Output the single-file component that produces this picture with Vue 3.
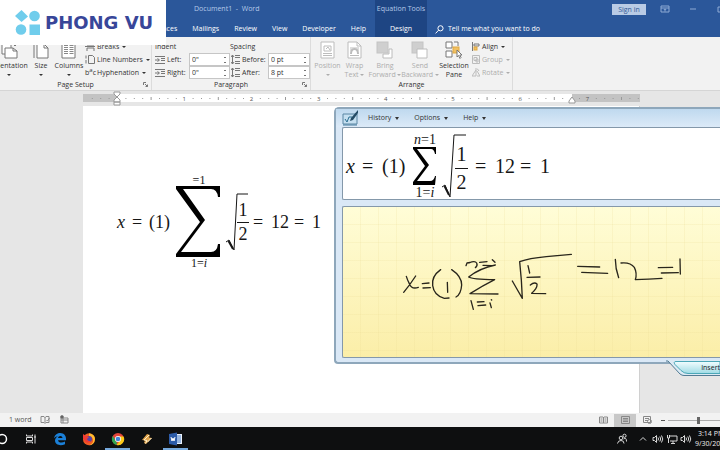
<script setup>
const tabs = ['References', 'Mailings', 'Review', 'View', 'Developer', 'Help']
const indents = [
  { id: 'left', label: 'Left:', value: '0"' },
  { id: 'right', label: 'Right:', value: '0"' },
]
const spacings = [
  { id: 'before', label: 'Before:', value: '0 pt' },
  { id: 'after', label: 'After:', value: '8 pt' },
]
const inches = [1, 2, 3, 4, 5, 6, 7]
const ticks = Array.from({ length: 66 }, (_, i) => i - 3).filter((i) => i % 8 !== 0)
const menus = ['History', 'Options', 'Help']
</script>

<template>
  <div class="app">
    <header class="titlebar">
      <nav class="tabs">
        <a v-for="tab in tabs" :key="tab" href="#">{{ tab }}</a>
      </nav>
      <div class="tools">
        <span>Equation Tools</span>
        <a href="#">Design</a>
      </div>
      <a class="tell" href="#">
        <svg width="9" height="9" viewBox="0 0 9 9"><circle cx="5.5" cy="3.3" r="2.6" /><path d="M3.6 5.2 .6 8.4" /></svg>
        Tell me what you want to do
      </a>
      <div class="window">
        <button class="signin">Sign in</button>
        <svg width="74" height="10" viewBox="0 0 74 10">
          <path d="M15 2h8v6h-8zM15 4h8M19 7.500V5M17.800 6 19 4.800 20.200 6M44 5h6M72 3h5v5h-5z" />
        </svg>
      </div>
      <span class="title">Document1&nbsp; -&nbsp; Word</span>
    </header>

    <div class="brand">
      <svg width="26" height="26" viewBox="0 0 26 26">
        <path d="M6.500 0 13 6.500 6.500 12 0 6z" /><circle cx="19.500" cy="6" r="5.300" />
        <circle cx="6" cy="19.500" r="5.300" /><rect x="14.500" y="14.500" width="10.500" height="10.500" />
      </svg>
      <span>PHONG VU</span>
    </div>

    <section class="ribbon">
      <div class="group setup">
        <div class="body">
          <button class="big orient">
            <svg width="20" height="18" viewBox="0 0 20 18"><path class="page" d="M3 1h6l3 3v9H3z" /><path class="page" d="M6 7h8l4 3v7H6z" /><path d="M14 7v3h4M12 1q4 0 4 4M14.500 3.500 16 5l1.500-1.500" /></svg>
            <span>Orientation</span><i class="caret"></i>
          </button>
          <button class="big size">
            <svg width="18" height="18" viewBox="0 0 18 18"><path class="page" d="M5 3h7l4 4v10H5z" /><path d="M12 3v4h4M2 2v15M1 3l1-2 1 2M5 1h10" /></svg>
            <span>Size</span><i class="caret"></i>
          </button>
          <button class="big cols">
            <svg width="16" height="18" viewBox="0 0 16 18"><path class="page" d="M1 1h13v16H1z" /><path class="lines" d="M3 4.500h4M3 6.500h4M3 8.500h4M3 10.500h4M8.500 4.500h4M8.500 6.500h4M8.500 8.500h4M8.500 10.500h4M3 12.500h4M8.500 12.500h4" /></svg>
            <span>Columns</span><i class="caret"></i>
          </button>
          <div class="rows">
            <button class="row"><svg width="10" height="9" viewBox="0 0 10 9"><path d="M2 0v3h7V0M2 9V6h7v3M0 4.500h10" /></svg>Breaks<i class="caret"></i></button>
            <button class="row"><svg width="10" height="9" viewBox="0 0 10 9"><path d="M3.500.5h4l2 2v6h-6zM1 .5v3M1 5v3.500" /></svg>Line Numbers<i class="caret"></i></button>
            <button class="row"><b class="bc">b<sup>a</sup>c</b>Hyphenation<i class="caret"></i></button>
          </div>
        </div>
        <footer>Page Setup<svg class="launch" width="5" height="5" viewBox="0 0 5 5"><path d="M.5 3V.5H3M2 2l2.500 2.500M4.500 2.500v2h-2" /></svg></footer>
      </div>

      <div class="group para">
        <div class="body">
          <div class="fields indent">
            <strong>Indent</strong>
            <div v-for="f in indents" :key="f.id" class="field">
              <svg width="10" height="8" viewBox="0 0 10 8"><path d="M0 .5h10M6 2.500h4M6 4.500h4M0 7.500h10M0 4h4M2.500 2.500 4.500 4 2.500 5.500" /></svg>
              <label :for="f.id">{{ f.label }}</label>
              <span class="spin"><input :id="f.id" :value="f.value" /><i></i></span>
            </div>
          </div>
          <div class="fields spacing">
            <strong>Spacing</strong>
            <div v-for="f in spacings" :key="f.id" class="field">
              <svg width="9" height="9" viewBox="0 0 9 9"><path d="M4 .5h5M4 2.500h5M4 6.500h5M4 8.500h5M1.500 0v9M0 2l1.500-2L3 2M0 7l1.500 2L3 7" /></svg>
              <label :for="f.id">{{ f.label }}</label>
              <span class="spin"><input :id="f.id" :value="f.value" /><i></i></span>
            </div>
          </div>
        </div>
        <footer>Paragraph<svg class="launch" width="5" height="5" viewBox="0 0 5 5"><path d="M.5 3V.5H3M2 2l2.500 2.500M4.500 2.500v2h-2" /></svg></footer>
      </div>

      <div class="group arrange">
        <div class="body">
          <button class="big off" disabled>
            <svg width="16" height="18" viewBox="0 0 16 18"><path class="page" d="M1 1h13v16H1z" /><path d="M4 5h7v5H4zM3 12.500h9M3 14.500h9M6 8l2-2 2 3" /></svg>
            <span>Position</span><i class="caret"></i>
          </button>
          <button class="big off" disabled>
            <svg width="16" height="18" viewBox="0 0 16 18"><path class="page" d="M1 1h9l4 4v12H1z" /><path d="M10 1v4h4M3 7h9M3 9h2M10 9h2M3 14.500h9" /><path class="bold" d="M4 13q0-5 3.500-5T11 13" /></svg>
            <span>Wrap<br />Text <i class="caret"></i></span>
          </button>
          <button class="big off wide" disabled>
            <svg width="18" height="18" viewBox="0 0 18 18"><rect class="fill" x="1" y="1" width="11" height="11" /><path class="page" d="M13 8h3v9H7v-4h6z" /></svg>
            <span>Bring<br />Forward <i class="caret"></i></span>
          </button>
          <button class="big off wide" disabled>
            <svg width="18" height="18" viewBox="0 0 18 18"><rect class="fill" x="1" y="1" width="11" height="11" /><path class="page" d="M6 8h10v9H6z" /></svg>
            <span>Send<br />Backward <i class="caret"></i></span>
          </button>
          <button class="big pane">
            <svg width="18" height="18" viewBox="0 0 18 18"><path class="page" d="M1 1h6v6H1zM1 10h6v6H1z" /><rect class="gold" x="8" y="6" width="6" height="6" /><path class="page" d="M9 1h4v4M12 9v7l1.500-1.500 1.500 3 1-1-1.200-2.500H17z" /></svg>
            <span>Selection<br />Pane</span>
          </button>
          <div class="rows">
            <button class="row"><svg width="8" height="9" viewBox="0 0 8 9"><path d="M.5 0v9M2 2h5v2H2z" /><rect class="gold" x="2" y="5" width="3" height="3" /></svg>Align<i class="caret"></i></button>
            <button class="row off" disabled><svg width="8" height="9" viewBox="0 0 8 9"><path d="M.5.5h7v8h-7zM2 2.500h3v3H2zM4 4h2v3H4z" /></svg>Group<i class="caret"></i></button>
            <button class="row off" disabled><svg width="8" height="9" viewBox="0 0 8 9"><path d="M0 8h4V2zM5 8h3L5 3M3 1q3-1 4 2" /></svg>Rotate<i class="caret"></i></button>
          </div>
        </div>
        <footer>Arrange</footer>
      </div>
    </section>

    <main class="workspace">
      <svg class="ruler" width="557" height="15" viewBox="0 0 557 15">
        <rect x="0" y="3" width="557" height="8" fill="#c3c3c3" />
        <rect x="34" y="3" width="455" height="8" fill="#fff" />
        <rect v-for="t in ticks" :key="t" class="tick" :x="34 + t * 8.4" :y="t % 4 ? 7 : 6" width="1" :height="t % 4 ? 1 : 3" />
        <text v-for="n in inches" :key="n" :x="34 + n * 67.2" y="10">{{ n }}</text>
        <path class="mark" d="M31 1h6v2l-3 3-3-3zM31 11V9l3-3 3 3v2zM31 11h6v3h-6zM486 10l3-4 3 4v2h-6z" />
      </svg>

      <article class="sheet">
        <div class="equation doc">
          <em>x</em><span>=</span><span>(1)</span>
          <span class="sum">
            <small>=1</small>
            <svg width="46" height="72" viewBox="0 0 46 72"><path d="M0 0h44v11h-2q-1-8-7-8H7l22 31L5 66h30q6 0 7-8h2v13H0v-3L24 36 0 3z" /></svg>
            <small>1=<em>i</em></small>
          </span>
          <span class="root">
            <svg width="22" height="58" viewBox="0 0 22 58"><path class="thin" d="M0 49l3-2 5 10L11 1h11" /><path class="thick" d="M2.500 48 7 56" /></svg>
            <span class="frac"><b>1</b><b>2</b></span>
          </span>
          <span>=</span><span>12</span><span>=</span><span>1</span>
        </div>
      </article>

      <section class="panel">
        <nav class="menu">
          <svg width="17" height="16" viewBox="0 0 17 16"><path d="M1 4h14v10H1z" fill="#c5dff0" stroke="#5b86a3" /><path d="M3 9l2 3 2-5h3" fill="none" stroke="#2a6e91" /><path d="M16 0 9 8l-1 3 3-1 5-7z" fill="#254c66" /><path d="M1 15h14" stroke="#437b9c" /></svg>
          <button v-for="m in menus" :key="m">{{ m }}<i class="caret"></i></button>
        </nav>
        <div class="preview">
          <div class="equation math">
            <em>x</em><span>=</span><span>(1)</span>
            <span class="sum">
              <small><em>n</em>=1</small>
              <svg width="24" height="38" viewBox="0 0 24 38"><path d="M0 0h23v7h-1q-1-5-4-5H4l12 16L4 34h13q4 0 5-5h1l-1 9H0v-3l12-16L0 2z" /></svg>
              <small>1=<em>i</em></small>
            </span>
            <span class="root">
              <svg width="25" height="64" viewBox="0 0 25 64"><path class="thin" d="M0 53l3-2 5 12L12 1h12" /><path class="thick" d="M2.500 52 7 61" /></svg>
              <span class="frac"><b>1</b><b>2</b></span>
            </span>
            <span>=</span><span>12</span><span>=</span><span>1</span>
          </div>
        </div>
        <div class="ink">
          <svg width="378" height="150" viewBox="36 36 1134 450">
            <path d="M226 244q3 10 9 22 7 18 27 11M254 243q-16 25-36 49M274 266l20-2M276 279l22-1M329 224q-28 20-24 48 4 30 35 38l14-1M349 262l1 30M362 224q30 20 30 46-2 28-17 36" />
            <path d="M405 212l3-8 9-2M414 204q18-8 23 0 4 7-4 14M446 202l22-2M456 211l26 1M484 194l8 8M493 210q-48 10-80 36 10 7 78 8-34 17-74 42l84 1M420 317l7 26M439 321l20-1M441 332l23-2M481 314l1 1M477 324l4 14" />
            <path d="M544 258q16 28 30 52-2-55-8-110 28-10 80-15l75-7M591 212l5 22M588 247l39-1M598 270q12-10 20-3 2 12-16 28l42 1" />
            <path d="M740 214l66 2M752 232l78 3M853 193q0 28 10 55M870 204q28-3 40 13 9 18 3 37 40-1 80-4M982 218l43-1M991 234l51-1M1047 192l1 45" />
          </svg>
        </div>
        <div class="foot">
          <svg width="54" height="16" viewBox="0 0 54 16">
            <defs><linearGradient id="teal" x2="0" y2="1"><stop offset="0" stop-color="#f2fdff" /><stop offset="1" stop-color="#9fdbe4" /></linearGradient></defs>
            <path d="M0-2h54v16H18q-3 0-6-4L3 0z" fill="#dceaf4" />
            <path d="M0-1h2l12 13q2 1.500 4 1.500h36" fill="none" stroke="#527b93" />
            <path d="M54-.500H10q-3 0-1 3l6 6q3 3 7 3h32z" fill="url(#teal)" stroke="#4ba7b7" />
          </svg>
          <button>Insert</button>
        </div>
      </section>
    </main>

    <div class="status">
      <span class="words">1 word</span>
      <svg width="30" height="10" viewBox="0 0 30 10"><path d="M1 1.500h3l1 1 1-1h3v6H6l-1 1-1-1H1zM5 2v6M6.500 5l1 1 2-3M21 3h7v5h-7zM21 5h7M23 3v5" /><circle class="dot" cx="22" cy="2" r="1.500" /></svg>
      <div class="views">
        <button aria-label="Read mode"><svg width="9" height="8" viewBox="0 0 9 8"><path d="M.5 1h3.500l.5.500L5 1h3.500v6H.5zM4.500 1v6M1.500 3h2M1.500 5h2M5.500 3h2M5.500 5h2" /></svg></button>
        <button class="on" aria-label="Print layout"><svg width="9" height="8" viewBox="0 0 9 8"><path d="M.5.5h8v7h-8zM2 2.500h5M2 4h5M2 5.500h5" /></svg></button>
        <button aria-label="Web layout"><svg width="9" height="8" viewBox="0 0 9 8"><path d="M.5.5h7v6h-7zM2 2.500h4M2 4.500h3" /><circle cx="6.500" cy="5.500" r="2" /></svg></button>
      </div>
      <span class="minus"></span>
      <input class="zoom" type="range" aria-label="Zoom" min="0" max="100" value="60" />
    </div>

    <footer class="taskbar">
      <div class="apps">
        <button aria-label="Search"><svg width="14" height="14" viewBox="0 0 14 14"><circle cx="7" cy="7" r="4.500" fill="none" stroke="#fff" stroke-width="1.500" /></svg></button>
        <button aria-label="Task view"><svg width="14" height="14" viewBox="0 0 14 14"><path d="M2.500 2.500v1.500h6V2.500M2.500 11.500V10h6v1.500M2.500 5.500h6v3h-6zM11 2.500v9M10 5h2" fill="none" stroke="#ddd" /></svg></button>
        <button aria-label="Edge"><svg width="14" height="14" viewBox="0 0 14 14"><path d="M1 6.300C2 2.500 4.300 1 7.300 1 11 1 13 4 13 6.500v1.700H5c.3 2.600 4 3 7 1.300v2.700C7 14.500 2 12.500 2 8.500c0-2 1.300-3.500 3-4.300C3.500 4.300 2 5 1 6.300zM5 6h4.500C9.300 3.200 5.500 3.200 5 6z" fill="#1b80d8" /></svg></button>
        <button aria-label="Firefox"><svg width="14" height="14" viewBox="0 0 14 14"><circle cx="7" cy="7.300" r="6" fill="#f05a22" /><path d="M7 1.300q6 1 6 6-1 6-6 6 5-2 4-6-1-3-4-3z" fill="#ffbd2e" /><circle cx="7" cy="7" r="3" fill="#5246a8" /><path d="M1 6V2l3 2 3 1-2 2q1 3 4 1.500Q7 12 3.500 10z" fill="#ef3b34" /></svg></button>
        <button class="open" aria-label="Chrome"><svg width="14" height="14" viewBox="0 0 14 14"><circle cx="7" cy="7" r="6" fill="#e4463a" /><path d="M1.800 4 6 11l-.5 2A6 6 0 0 1 1.800 4z" fill="#2fa653" /><path d="M7 4.500h5.500A6 6 0 0 1 5.500 13l4-5z" fill="#fbc917" /><circle cx="7" cy="7" r="3" fill="#fff" /><circle cx="7" cy="7" r="2.300" fill="#4285d9" /></svg></button>
        <button aria-label="Winamp"><svg width="14" height="14" viewBox="0 0 14 14"><path d="M7 2 2 8l3 .5L4 11l2 1 6-6-3-.5L10 3z" fill="#e0a34b" /><path d="M9 3 4 8l3 .5-1.500 3M11.500 6l-4 4" fill="none" stroke="#fff0cc" /></svg></button>
        <button class="open" aria-label="Word"><svg width="14" height="14" viewBox="0 0 14 14"><path d="M7 2h6v10H7z" fill="#e9f1fc" /><path d="M8 4h4M8 6h4M8 8h4M8 10h4" stroke="#467ac2" /><path d="M0 2l8-1.500v13L0 12z" fill="#2c5ba8" /><path d="M2 5l1 4 1-3 1 3 1-4" fill="none" stroke="#fff" /></svg></button>
      </div>
      <div class="tray">
        <svg width="76" height="14" viewBox="0 0 76 14">
          <circle cx="4" cy="6" r="1.800" /><path d="M.5 11.500q.5-3 3.500-3t3 3M6.500 7q3-2 3 2.500" /><circle cx="7.500" cy="3.800" r="1.600" />
          <path d="M23 8.500 26 5.500l3 3" />
          <path d="M36 5.500h1.500l2-2v7l-2-2H36zM41 5.500q1 1.500 0 3M42.800 4.500q1.800 2.500 0 5M44.500 3.500q2.500 3.500 0 7" />
          <path d="M52 4h8v5h-7M56 9v2M54 11.500h4M50.500 3v3h2V3M51.500 6v5" />
          <path d="M64 5.500h1.500l2-2v7l-2-2H64zM69 5.500q1 1.500 0 3M70.800 4.500q1.800 2.500 0 5M72.500 3.500q2.500 3.500 0 7" />
        </svg>
        <time><span>3:14 PM</span><span>9/30/2019</span></time>
      </div>
    </footer>
  </div>
</template>

<style>
body { background: #e6e6e6; }
</style>

<style scoped>
* { box-sizing: border-box; }
.app {
  position: relative;
  display: flex;
  flex-direction: column;
  min-height: 100vh;
  overflow: hidden;
  font: 7px/10px "Open Sans", "Noto Sans", sans-serif;
  color: #333;
}
button { padding: 0; border: 0; background: none; font: inherit; color: inherit; }
a { color: inherit; text-decoration: none; }
svg { flex: none; }
.caret {
  display: inline-block;
  flex: none;
  border: 2px solid transparent;
  border-top-color: currentColor;
  border-bottom: 0;
  width: 0;
}

.titlebar { position: relative; display: flex; height: 37px; background: #2b579a; color: #fff; white-space: nowrap; }
.title { position: absolute; left: 194px; top: 4px; color: #b5c9e8; }
.tabs { display: flex; align-items: flex-end; justify-content: flex-end; gap: 15px; width: 375px; padding: 0 9px 3px 0; }
.tools { display: flex; flex-direction: column; justify-content: space-between; align-items: center; width: 52px; padding: 4px 0 3px; background: #1e4583; }
.tools span { color: #b5c9e8; }
.tell { display: flex; align-items: center; gap: 4px; align-self: flex-end; padding: 0 0 3px 8px; }
.tell svg { fill: none; stroke: #fff; }
.window { display: flex; align-items: flex-start; margin-left: auto; padding-top: 4px; }
.window svg { fill: none; stroke: #8fabd4; }
.signin { width: 34px; height: 11px; background: #b9cbe5; color: #315b98; line-height: 10px; }

.brand { position: absolute; left: 0; top: 0; display: flex; align-items: center; gap: 4px; width: 166px; height: 45px; padding-left: 15px; background: #fff; }
.brand svg { fill: #70cdec; }
.brand span { font: bold 18px/22px "DejaVu Sans", sans-serif; color: #384699; white-space: nowrap; }

.ribbon { display: flex; height: 54px; background: #f2f2f2; border-bottom: 1px solid #d5d5d5; white-space: nowrap; overflow: hidden; }
.ribbon svg { fill: none; stroke: #777; }
.ribbon svg .page { fill: #fff; }
.ribbon svg .fill { fill: #cfcfcf; stroke: #c4c4c4; }
.ribbon svg .gold { fill: #f0c062; stroke: #e0a840; }
.ribbon svg .lines { stroke: #888; }
.ribbon svg .bold { stroke-width: 2; }
.group { display: flex; flex-direction: column; padding-top: 3px; border-right: 1px solid #dcdcdc; }
.body { display: flex; height: 41px; }
.group footer { position: relative; padding-top: 1px; text-align: center; line-height: 10px; }
.launch { position: absolute; right: 3px; top: 3px; }
.setup { width: 152px; }
.para { width: 159px; }
.arrange { width: 202px; }
.big { display: flex; flex-direction: column; align-items: center; width: 27px; padding-top: 1px; line-height: 9px; }
.big > svg { margin-bottom: 2px; }
.big > .caret { margin-top: 4px; }
.big .caret { vertical-align: middle; }
.off { color: #adadad; }
.ribbon .off svg { stroke: #bcbcbc; }
.orient { width: 36px; margin-left: -9px; }
.size { width: 28px; }
.cols { width: 28px; }
.rows { display: flex; flex-direction: column; }
.row { display: flex; align-items: center; gap: 2px; height: 13px; }
.row .caret { margin-left: 1px; }
.setup .rows { padding-left: 2px; }
.bc { width: 10px; font-weight: 400; }
.bc sup { font-size: 6px; line-height: 0; }
.arrange .body { padding-left: 3px; }
.wide { width: 34px; }
.wide + .wide { width: 36px; }
.pane { width: 32px; }
.arrange .rows { padding-left: 2px; }
.fields { display: flex; flex-direction: column; }
.fields strong { font-weight: 400; line-height: 13px; }
.indent { width: 78px; padding-left: 3px; }
.field { display: flex; align-items: center; height: 13px; }
.indent .field { gap: 2px; }
.indent label { width: 20px; }
.field label { flex: none; }
.spacing .field { gap: 2px; padding-left: 1px; }
.spacing label { width: 24px; }
.spin { display: flex; position: relative; width: 42px; height: 13px; background: #fff; border: 1px solid #c6c6c6; }
.spin input { width: 100%; min-width: 0; padding: 0 2px; border: 0; background: none; font: inherit; color: inherit; outline: 0; }
.spin i { width: 4px; margin: 2px 2px 2px 0; flex: none; background: linear-gradient(#777, #777) 1px 1px / 2px 1px no-repeat, linear-gradient(#777, #777) 1px 6px / 2px 1px no-repeat; }

.workspace { position: relative; flex: 1; display: flex; flex-direction: column; padding-left: 83px; background: #e6e6e6; }
.ruler text { font: 6px "Open Sans", sans-serif; text-anchor: middle; fill: #555; }
.ruler .tick { fill: #999; }
.ruler .mark { fill: #fff; stroke: #999; }
.sheet { flex: 1; width: 557px; padding: 69px 34px 0; background: #fff; border-right: 1px solid #d0d0d0; }

.equation { display: grid; align-items: center; width: max-content; color: #161616; font-family: "Liberation Serif", serif; font-size: 18px; line-height: 20px; white-space: nowrap; }
.doc { grid-template-columns: 15px 17px 27px 50px 27px 18px 23px 18px 10px; }
.math { grid-template-columns: 16px 20px 31px 29px 33px 20px 25px 20px 12px; font-size: 20px; }
.sum { display: flex; flex-direction: column; align-items: center; width: 46px; line-height: 10px; }
.math .sum { gap: 2px; width: 24px; }
.sum small { font: 12px/11px "Liberation Serif", serif; }
.math .sum small { font-size: 14px; }
.root { position: relative; display: flex; }
.root .thin { fill: none; stroke: #161616; }
.root .thick { fill: none; stroke: #161616; stroke-width: 2; }
.frac { position: absolute; right: 4px; top: 6px; display: flex; flex-direction: column; width: 12px; text-align: center; }
.frac b { font-weight: 400; line-height: 23px; }
.frac b + b { border-top: 1px solid #161616; }
.math .frac { right: 7px; top: 7px; width: 13px; }
.math .frac b { line-height: 27px; }

.panel { position: absolute; left: 334px; right: 0; top: 16px; padding: 0 0 4px 6px; border: 2px solid #8ea7bb; border-width: 2px 0 2px 2px; border-radius: 5px 0 0 4px; background: #dae8f6; }
.menu { display: flex; align-items: center; gap: 15px; height: 18px; background: linear-gradient(#bfd9ef, #dceaf8); margin-left: -6px; padding-left: 6px; }
.menu svg { margin-right: -6px; }
.menu button { display: flex; align-items: center; gap: 4px; color: #333; }
.menu .caret { border-width: 3px 2px 0; }
.preview { height: 73px; padding: 6px 0 0 3px; overflow: hidden; background: #fff; border: 1px solid #8498aa; border-right: 0; border-radius: 2px 0 0 2px; }
.ink {
  height: 152px;
  margin-top: 6px;
  overflow: hidden;
  border: 1px solid #8498aa;
  border-right: 0;
  border-radius: 2px 0 0 2px;
  background: repeating-linear-gradient(90deg, transparent 0 17px, #e9d99130 17px 18px), repeating-linear-gradient(transparent 0 17px, #e9d99130 17px 18px), linear-gradient(#fffdd7, #fbeea8);
}
.ink path { fill: none; stroke: #29261c; stroke-width: 4; stroke-linecap: round; stroke-linejoin: round; }
.foot { position: absolute; right: 0; top: 100%; width: 54px; height: 16px; }
.foot svg { position: absolute; right: 0; top: 0; overflow: visible; }
.foot button { position: absolute; right: 0; top: 0; width: 20px; color: #222; line-height: 11px; text-align: right; }

.status { display: flex; align-items: center; height: 14px; padding-left: 9px; background: #f2f2f2; white-space: nowrap; }
.status svg { fill: none; stroke: #888; }
.words { width: 31px; color: #555; }
.status .dot { fill: #555; }
.views { display: flex; margin-left: auto; }
.views button { display: flex; align-items: center; justify-content: center; width: 22px; height: 13px; }
.views .on { background: #c8c8c8; }
.minus { width: 4px; height: 1px; margin: 0 3px; background: #555; }
.zoom { appearance: none; width: 52px; height: 8px; margin: 0; background: linear-gradient(#aaa, #aaa) 0 50% / 100% 1px no-repeat; }
.zoom::-webkit-slider-thumb { appearance: none; width: 3px; height: 7px; background: #666; }

.taskbar { display: flex; align-items: center; height: 23px; background: #0e0f10; color: #eee; white-space: nowrap; }
.apps { display: flex; margin-left: -13px; }
.apps button { display: flex; align-items: center; justify-content: center; width: 29px; height: 23px; }
.apps .open { border-bottom: 2px solid #76a9dc; width: 25px; margin: 0 2px; padding-top: 2px; }
.tray { display: flex; align-items: center; gap: 2px; margin-left: auto; }
.tray svg { fill: none; stroke: #d8d8d8; }
.tray time { display: flex; flex-direction: column; width: 25px; line-height: 10px; }
.tray time span:first-child { padding-left: 3px; }
</style>
